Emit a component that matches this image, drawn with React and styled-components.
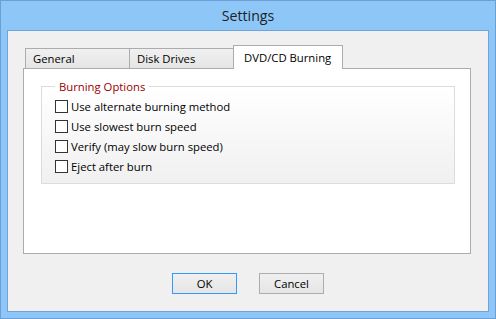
import React from 'react'
import styled, { createGlobalStyle } from 'styled-components'

const GlobalStyle = createGlobalStyle`
    html, body {
        margin: 0;
        padding: 0;
        background: #8cc7f8;
    }
    * {
        box-sizing: border-box;
    }
`

const Janela = styled.div`
    width: 496px;
    height: 319px;
    background-color: #8cc7f8;
    border: 1px solid #6d9fd6;
    padding: 0 6px 6px 6px;
    display: flex;
    flex-direction: column;
    font-family: "Open Sans", "Noto Sans", sans-serif;
    font-size: 11.3px;
    color: #000;
`

const Titulo = styled.div`
    height: 29px;
    display: flex;
    align-items: center;
    justify-content: center;
    font-size: 14.2px;
    color: #1e1e1e;
    padding-bottom: 1px;
`

const Cliente = styled.div`
    flex: 1;
    background-color: #f0f0f0;
    border: 1px solid #74a3d8;
    padding: 15px 0 0 15px;
    display: flex;
    flex-direction: column;
`

const LinhaAbas = styled.div`
    display: flex;
    align-items: flex-end;
    padding-left: 2px;
    height: 23px;
    margin-bottom: -1px;
`

const Aba = styled.div`
    position: relative;
    height: ${p => (p.$ativa ? '24px' : '21px')};
    width: ${p => p.$largura}px;
    margin-left: ${p => (p.$primeira ? '0' : '-1px')};
    z-index: ${p => (p.$ativa ? 2 : 1)};
    background: ${p => (p.$ativa ? '#fff' : 'linear-gradient(#f0f0f0, #e5e5e5)')};
    border: 1px solid #acacac;
    border-bottom: ${p => (p.$ativa ? 'none' : '1px solid #acacac')};
    padding-left: ${p => (p.$ativa ? '10px' : '7px')};
    display: flex;
    align-items: center;
    line-height: 15px;
    padding-bottom: ${p => (p.$ativa ? '1px' : '0')};
`

const Painel = styled.div`
    width: 448px;
    height: 186px;
    background-color: #fff;
    border: 1px solid #acacac;
    padding: 10px 15px 0 17px;
`

const Grupo = styled.fieldset`
    margin: 0;
    height: 105px;
    border: 1px solid #dcdcdc;
    padding: 2px 0 0 13px;
    background: linear-gradient(#ffffff, #f0f0f0);
    display: flex;
    flex-direction: column;

    legend {
        color: #990000;
        padding: 0 4px;
        margin-left: 0;
        line-height: 15px;
    }
`

const Opcao = styled.label`
    height: 20px;
    display: flex;
    align-items: center;
    gap: 3px;
`

const Caixa = styled.span`
    width: 13px;
    height: 13px;
    border: 1px solid #333;
    background-color: #fff;
`

const Rodape = styled.div`
    display: flex;
    justify-content: center;
    gap: 22px;
    padding-top: 19px;
    padding-right: 15px;
`

const Botao = styled.div`
    width: 65px;
    height: 21px;
    border: 1px solid ${p => (p.$padrao ? '#3399ff' : '#adadad')};
    background: linear-gradient(#f0f0f0, #e5e5e5);
    display: flex;
    align-items: center;
    justify-content: center;
    padding-bottom: 1px;
`

const opcoes = [
    'Use alternate burning method',
    'Use slowest burn speed',
    'Verify (may slow burn speed)',
    'Eject after burn',
]

const App = () => {
    return (
        <>
            <GlobalStyle />
            <Janela>
                <Titulo>Settings</Titulo>
                <Cliente>
                    <LinhaAbas>
                        <Aba $primeira $largura={105}>General</Aba>
                        <Aba $largura={105}>Disk Drives</Aba>
                        <Aba $ativa $largura={110}>DVD/CD Burning</Aba>
                    </LinhaAbas>
                    <Painel>
                        <Grupo>
                            <legend>Burning Options</legend>
                            {opcoes.map(texto => (
                                <Opcao key={texto}>
                                    <Caixa />
                                    {texto}
                                </Opcao>
                            ))}
                        </Grupo>
                    </Painel>
                    <Rodape>
                        <Botao $padrao>OK</Botao>
                        <Botao>Cancel</Botao>
                    </Rodape>
                </Cliente>
            </Janela>
        </>
    )
}

export default App
